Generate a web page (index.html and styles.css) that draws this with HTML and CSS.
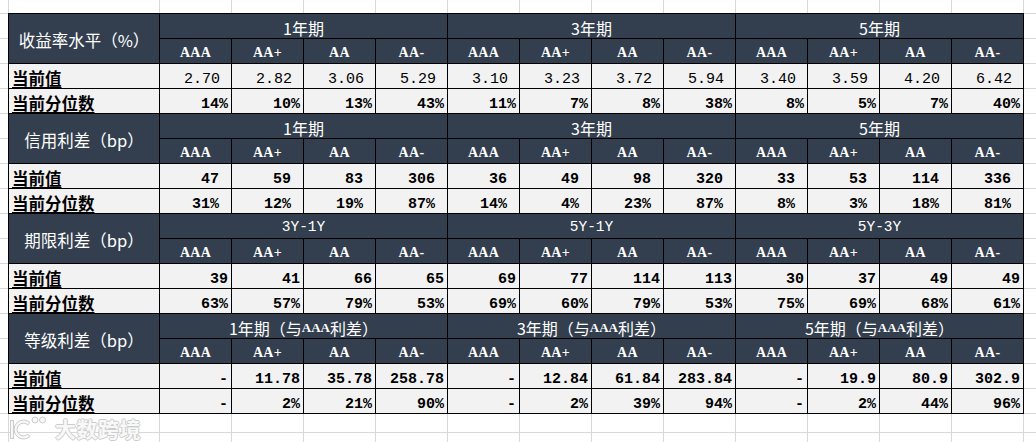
FILE: index.html
```html
<!DOCTYPE html>
<html lang="zh-CN">
<head>
<meta charset="utf-8">
<title>利差水平</title>
<link rel="stylesheet" href="styles.css">
</head>
<body>
<div class="sheet">
  <div class="grid">
    <!-- Block 1 -->
    <div class="h corner">收益率水平（%）</div>
    <div class="h period">1年期</div>
    <div class="h period">3年期</div>
    <div class="h period">5年期</div>
    <div class="h grade">AAA</div><div class="h grade">AA+</div><div class="h grade">AA</div><div class="h grade">AA-</div>
    <div class="h grade">AAA</div><div class="h grade">AA+</div><div class="h grade">AA</div><div class="h grade">AA-</div>
    <div class="h grade">AAA</div><div class="h grade">AA+</div><div class="h grade">AA</div><div class="h grade">AA-</div>
    <div class="label">当前值</div>
    <div class="num reg">2.70</div><div class="num reg">2.82</div><div class="num reg">3.06</div><div class="num reg">5.29</div>
    <div class="num reg">3.10</div><div class="num reg">3.23</div><div class="num reg">3.72</div><div class="num reg">5.94</div>
    <div class="num reg">3.40</div><div class="num reg">3.59</div><div class="num reg">4.20</div><div class="num reg">6.42</div>
    <div class="label">当前分位数</div>
    <div class="num">14%</div><div class="num">10%</div><div class="num">13%</div><div class="num">43%</div>
    <div class="num">11%</div><div class="num">7%</div><div class="num">8%</div><div class="num">38%</div>
    <div class="num">8%</div><div class="num">5%</div><div class="num">7%</div><div class="num">40%</div>

    <!-- Block 2 -->
    <div class="h corner">信用利差（bp）</div>
    <div class="h period">1年期</div>
    <div class="h period">3年期</div>
    <div class="h period">5年期</div>
    <div class="h grade">AAA</div><div class="h grade">AA+</div><div class="h grade">AA</div><div class="h grade">AA-</div>
    <div class="h grade">AAA</div><div class="h grade">AA+</div><div class="h grade">AA</div><div class="h grade">AA-</div>
    <div class="h grade">AAA</div><div class="h grade">AA+</div><div class="h grade">AA</div><div class="h grade">AA-</div>
    <div class="label">当前值</div>
    <div class="num bp">47</div><div class="num bp">59</div><div class="num bp">83</div><div class="num bp">306</div>
    <div class="num bp">36</div><div class="num bp">49</div><div class="num bp">98</div><div class="num bp">320</div>
    <div class="num bp">33</div><div class="num bp">53</div><div class="num bp">114</div><div class="num bp">336</div>
    <div class="label">当前分位数</div>
    <div class="num bp">31%</div><div class="num bp">12%</div><div class="num bp">19%</div><div class="num bp">87%</div>
    <div class="num bp">14%</div><div class="num bp">4%</div><div class="num bp">23%</div><div class="num bp">87%</div>
    <div class="num bp">8%</div><div class="num bp">3%</div><div class="num bp">18%</div><div class="num bp">81%</div>

    <!-- Block 3 -->
    <div class="h corner">期限利差（bp）</div>
    <div class="h period mono">3Y-1Y</div>
    <div class="h period mono">5Y-1Y</div>
    <div class="h period mono">5Y-3Y</div>
    <div class="h grade">AAA</div><div class="h grade">AA+</div><div class="h grade">AA</div><div class="h grade">AA-</div>
    <div class="h grade">AAA</div><div class="h grade">AA+</div><div class="h grade">AA</div><div class="h grade">AA-</div>
    <div class="h grade">AAA</div><div class="h grade">AA+</div><div class="h grade">AA</div><div class="h grade">AA-</div>
    <div class="label">当前值</div>
    <div class="num">39</div><div class="num">41</div><div class="num">66</div><div class="num">65</div>
    <div class="num">69</div><div class="num">77</div><div class="num">114</div><div class="num">113</div>
    <div class="num">30</div><div class="num">37</div><div class="num">49</div><div class="num">49</div>
    <div class="label">当前分位数</div>
    <div class="num">63%</div><div class="num">57%</div><div class="num">79%</div><div class="num">53%</div>
    <div class="num">69%</div><div class="num">60%</div><div class="num">79%</div><div class="num">53%</div>
    <div class="num">75%</div><div class="num">69%</div><div class="num">68%</div><div class="num">61%</div>

    <!-- Block 4 -->
    <div class="h corner">等级利差（bp）</div>
    <div class="h period">1年期（与<span class="aaa">AAA</span>利差）</div>
    <div class="h period">3年期（与<span class="aaa">AAA</span>利差）</div>
    <div class="h period">5年期（与<span class="aaa">AAA</span>利差）</div>
    <div class="h grade">AAA</div><div class="h grade">AA+</div><div class="h grade">AA</div><div class="h grade">AA-</div>
    <div class="h grade">AAA</div><div class="h grade">AA+</div><div class="h grade">AA</div><div class="h grade">AA-</div>
    <div class="h grade">AAA</div><div class="h grade">AA+</div><div class="h grade">AA</div><div class="h grade">AA-</div>
    <div class="label">当前值</div>
    <div class="num">-</div><div class="num">11.78</div><div class="num">35.78</div><div class="num">258.78</div>
    <div class="num">-</div><div class="num">12.84</div><div class="num">61.84</div><div class="num">283.84</div>
    <div class="num">-</div><div class="num">19.9</div><div class="num">80.9</div><div class="num">302.9</div>
    <div class="label">当前分位数</div>
    <div class="num">-</div><div class="num">2%</div><div class="num">21%</div><div class="num">90%</div>
    <div class="num">-</div><div class="num">2%</div><div class="num">39%</div><div class="num">94%</div>
    <div class="num">-</div><div class="num">2%</div><div class="num">44%</div><div class="num">96%</div>
  </div>

  <div class="watermark">
    <svg class="wm-logo" width="40" height="26" viewBox="0 0 40 26" aria-hidden="true">
      <g stroke="#cccccc" stroke-width="1" fill="#f8f8f8">
        <rect x="1.5" y="5.5" width="3" height="18"/>
        <path d="M21 7.5 A9.5 9.5 0 1 0 21 21.5 L18.8 19 A6.3 6.3 0 1 1 18.8 10 Z"/>
        <circle cx="26" cy="5" r="3"/>
        <circle cx="33.5" cy="5" r="3"/>
      </g>
    </svg>
    <span class="wm-text">大数跨境</span>
  </div>
</div>
</body>
</html>
```

FILE: styles.css
```css
html, body {
  margin: 0;
  padding: 0;
  background: #fff;
}

.sheet {
  width: 1036px;
  height: 442px;
  overflow: hidden;
  box-sizing: border-box;
  padding: 13px 0 0 8px;
  background-color: #fff;
  background-image:
    linear-gradient(#d8d8d8, #d8d8d8),
    repeating-linear-gradient(to right, #d8d8d8 0 1px, transparent 1px 72px),
    linear-gradient(#d8d8d8, #d8d8d8),
    repeating-linear-gradient(to bottom, #d8d8d8 0 1px, transparent 1px 25px);
  background-repeat: no-repeat;
  background-size:
    1px 100%,
    865px 100%,
    100% 1px,
    100% 401px;
  background-position:
    8px 0,
    159px 0,
    0 432px,
    0 13px;
}

.grid {
  display: grid;
  grid-template-columns: 150px repeat(12, 71px);
  grid-auto-rows: 24px;
  gap: 1px;
  padding: 1px;
  background: #000;
  width: max-content;
}

.h {
  background: #333f4f;
  color: #fff;
  display: flex;
  justify-content: center;
  align-items: flex-end;
  font-family: "Noto Sans CJK SC", sans-serif;
  font-size: 16px;
  line-height: 20px;
  white-space: nowrap;
}

.corner {
  grid-row: span 2;
  align-items: center;
  font-size: 16.5px;
  padding-top: 2px;
}

.period {
  grid-column: span 4;
}

.period.mono {
  font-family: "Liberation Mono", monospace;
  font-size: 14.5px;
  padding-bottom: 1px;
}

.aaa {
  font-family: "Liberation Serif", serif;
  font-weight: bold;
  font-size: 13px;
}

.grade {
  font-family: "Liberation Serif", serif;
  font-weight: bold;
  font-size: 14px;
  letter-spacing: 0.3px;
  align-items: center;
  padding-top: 3px;
}

.label {
  background: #f2f2f2;
  color: #000;
  display: flex;
  align-items: flex-end;
  padding-left: 3px;
  font-family: "Noto Sans CJK SC", sans-serif;
  font-weight: bold;
  font-size: 16.5px;
  line-height: 20px;
  text-decoration: underline;
  text-underline-offset: 2px;
}

.num {
  background: #f2f2f2;
  color: #000;
  display: flex;
  justify-content: flex-end;
  align-items: flex-end;
  padding-right: 3px;
  font-family: "Liberation Mono", monospace;
  font-weight: bold;
  font-size: 15px;
  line-height: 16px;
  white-space: nowrap;
}

.num.reg {
  font-weight: normal;
  padding-right: 11px;
}

.num.bp {
  padding-right: 12px;
}

.watermark {
  display: flex;
  align-items: center;
  gap: 6px;
  height: 27px;
  margin: 0 0 0 1px;
}

.wm-text {
  font-family: "Noto Sans CJK SC", sans-serif;
  font-weight: bold;
  font-size: 21px;
  line-height: 24px;
  color: #f8f8f8;
  letter-spacing: 0.5px;
  text-shadow:
    1px 0 0 #cccccc,
    -1px 0 0 #cccccc,
    0 1px 0 #cccccc,
    0 -1px 0 #cccccc;
}
```
